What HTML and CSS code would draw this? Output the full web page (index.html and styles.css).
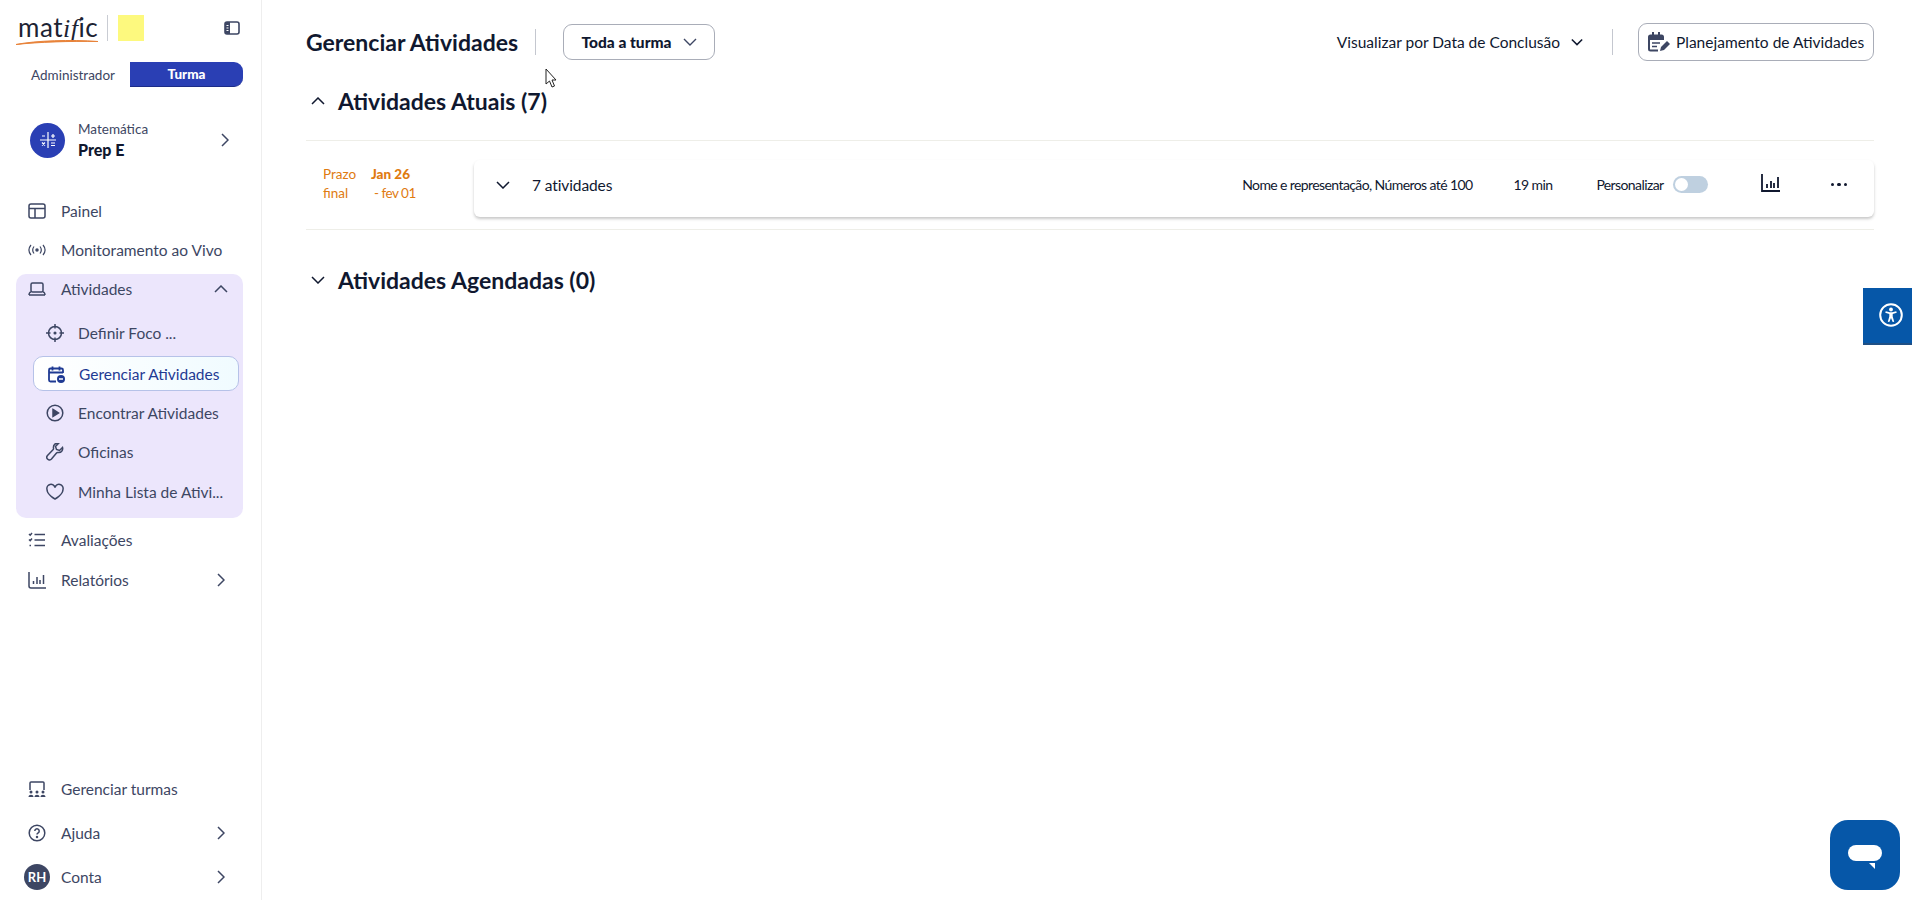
FILE: index.html
```html
<!DOCTYPE html>
<html lang="pt">
    <head>
        <meta charset="UTF-8">
        <title>Gerenciar Atividades</title>
        <link rel="stylesheet" href="styles.css">
    </head>
    <body>
        <aside class="sidebar">
            <div class="brand">
                <span class="logo">mat<i>if</i>ic
                    <svg class="logo-swoosh" viewBox="0 0 82 6"><path d="M0 5.500C20 1.500 55 .5 82 2.500 55 2 22 3 0 5.500z" fill="#e8833a" stroke="#e8833a"/></svg>
                </span>
                <span class="brand-divider"></span>
                <span class="school-badge"></span>
                <svg class="collapse-icon" viewBox="0 0 16 14"><rect x="1" y="1" width="14" height="12" rx="2" fill="none" stroke="#3d4663" stroke-width="1.6"/><path d="M1 3a2 2 0 0 1 2-2h3v12H3a2 2 0 0 1-2-2z" fill="#3d4663"/><path d="M2.500 4.500h2M2.500 7h2M2.500 9.500h2" stroke="#fff"/></svg>
            </div>
            <div class="role-tabs">
                <span class="role-tab">Administrador</span>
                <span class="role-tab role-active">Turma</span>
            </div>
            <div class="subject">
                <span class="subject-icon">
                    <svg viewBox="0 0 18 18" width="18" height="18" stroke="#fff" fill="none" stroke-width="1.2"><path d="M9 1v16M1 9h16M3 5h3M12 5h4M14 3v4M3 11.500l3 3M6 11.500l-3 3M12 12h4M12 14.500h4"/></svg>
                </span>
                <div class="subject-text">
                    <span class="subject-label">Matemática</span>
                    <span class="subject-name">Prep E</span>
                </div>
                <svg class="chevron subject-chevron" viewBox="0 0 8 14"><path d="M1 1l6 6-6 6"/></svg>
            </div>

            <nav class="nav">
                <a class="nav-item">
                    <svg class="nav-icon" viewBox="0 0 18 18"><rect x="1" y="2" width="16" height="14" rx="2"/><path d="M1 6.500h16M7 6.500V16"/></svg>
                    Painel
                </a>
                <a class="nav-item">
                    <svg class="nav-icon" viewBox="0 0 18 18"><circle cx="9" cy="9" r="1" fill="#3d4663"/><path d="M6 5.500c-1.500 2-1.500 5 0 7M12 5.500c1.500 2 1.500 5 0 7M3 4c-2.500 3-2.500 7 0 10M15 4c2.500 3 2.500 7 0 10" stroke-width="1.200"/></svg>
                    Monitoramento ao Vivo
                </a>
                <div class="nav-group">
                    <a class="nav-item group-head">
                        <svg class="nav-icon" viewBox="0 0 18 18"><rect x="3" y="3" width="12" height="9" rx="1.500"/><path d="M1 15h16M1 15c0-1.500 1-3 2-3M17 15c0-1.500-1-3-2-3"/></svg>
                        Atividades
                        <svg class="chevron" viewBox="0 0 14 8"><path d="M1 7l6-6 6 6"/></svg>
                    </a>
                    <a class="nav-item sub-item">
                        <svg class="nav-icon" viewBox="0 0 18 18"><circle cx="9" cy="9" r="6.500"/><circle cx="9" cy="9" r="0.800" fill="#3d4663"/><path d="M9 0v4.500M9 13.500V18M0 9h4.500M13.500 9H18"/></svg>
                        Definir Foco ...
                    </a>
                    <a class="nav-item sub-item sub-active">
                        <svg class="nav-icon" viewBox="0 0 18 18"><path d="M16 8V5a1.500 1.500 0 0 0-1.500-1.500h-11A1.500 1.500 0 0 0 2 5v10a1.500 1.500 0 0 0 1.500 1.500H9M2 7.500h14M5.500 1.500v4M12.500 1.500v4" stroke-width="1.800"/><circle cx="14" cy="14" r="4" fill="#1f3a93" stroke="none"/><path d="M12 14h4" stroke="#fff"/></svg>
                        Gerenciar Atividades
                    </a>
                    <a class="nav-item sub-item">
                        <svg class="nav-icon" viewBox="0 0 18 18"><circle cx="9" cy="9" r="7.800"/><path d="M7 5.500l5.500 3.500L7 12.500z" fill="#3d4663"/></svg>
                        Encontrar Atividades
                    </a>
                    <a class="nav-item sub-item">
                        <svg class="nav-icon" viewBox="0 0 18 18"><path d="M16.500 4.500l-3 3-3-1-1-3 3-3c-3-.8-5.500 1.500-5 4.500.1.600 0 1.200-.5 1.700L1.500 12.500a2.500 2.500 0 0 0 4 3.500l5-6c.4-.4 1-.6 1.600-.5 3 .5 5.200-2 4.400-5z"/></svg>
                        Oficinas
                    </a>
                    <a class="nav-item sub-item">
                        <svg class="nav-icon" viewBox="0 0 18 18"><path d="M9 16S1 11.500 1 6.500A4 4 0 0 1 9 4.500a4 4 0 0 1 8 2c0 5-8 9.500-8 9.500z"/></svg>
                        Minha Lista de Ativi...
                    </a>
                </div>
                <a class="nav-item">
                    <svg class="nav-icon" viewBox="0 0 18 18"><path d="M6.500 3.500H17M6.500 9H17M6.500 14.500H17M1 3l1.200 1.200L4 2M1 8.500l1.200 1.200L4 7.500M1.500 14.500h1.500"/></svg>
                    Avaliações
                </a>
                <a class="nav-item">
                    <svg class="nav-icon" viewBox="0 0 18 18"><path d="M1 1v14a2 2 0 0 0 2 2h15M5.500 10v3M9 6v7M12 9v4M15.500 4v9"/></svg>
                    Relatórios
                    <svg class="chevron" viewBox="0 0 8 14"><path d="M1 1l6 6-6 6"/></svg>
                </a>
            </nav>

            <div class="nav-bottom">
                <a class="nav-item">
                    <svg class="nav-icon" viewBox="0 0 18 18"><path d="M2 10V3a1 1 0 0 1 1-1h12a1 1 0 0 1 1 1v7"/><g fill="#3d4663" stroke="none"><circle cx="3" cy="12" r="1.500"/><circle cx="9" cy="12" r="1.500"/><circle cx="15" cy="12" r="1.500"/><path d="M0.500 17c0-3 5-3 5 0zM6.500 17c0-3 5-3 5 0zM12.500 17c0-3 5-3 5 0z"/></g></svg>
                    Gerenciar turmas
                </a>
                <a class="nav-item bottom-gap">
                    <svg class="nav-icon" viewBox="0 0 18 18"><circle cx="9" cy="9" r="7.800"/><path d="M6.800 7a2.200 2.200 0 1 1 3.400 1.900c-.8.500-1.200.9-1.200 1.700"/><circle cx="9" cy="13" r="0.500" fill="#3d4663"/></svg>
                    Ajuda
                    <svg class="chevron" viewBox="0 0 8 14"><path d="M1 1l6 6-6 6"/></svg>
                </a>
                <a class="nav-item">
                    <span class="avatar">RH</span>
                    Conta
                    <svg class="chevron" viewBox="0 0 8 14"><path d="M1 1l6 6-6 6"/></svg>
                </a>
            </div>
        </aside>

        <main class="content">
            <header class="topbar">
                <h1>Gerenciar Atividades</h1>
                <span class="top-divider"></span>
                <button class="class-select">
                    Toda a turma
                    <svg class="small-chevron" viewBox="0 0 14 8"><path d="M1 1l6 6 6-6"/></svg>
                </button>
                <div class="view-select">
                    Visualizar por Data de Conclusão
                    <svg class="small-chevron tight" viewBox="0 0 14 8"><path d="M1 1l6 6 6-6"/></svg>
                </div>
                <span class="top-divider right"></span>
                <button class="plan-button">
                    <svg class="plan-icon" viewBox="0 0 24 22"><path d="M16 9V6a1.500 1.500 0 0 0-1.500-1.500h-11A1.500 1.500 0 0 0 2 6v12a1.500 1.500 0 0 0 1.500 1.500H11" fill="none" stroke="#3d4663" stroke-width="2"/><path d="M2 6a2 2 0 0 1 2-2h10a2 2 0 0 1 2 2v3H2zM5 1h2v4H5zM11 1h2v4h-2z" fill="#3d4663"/><path d="M5 12h8M5 15.500h5" stroke="#3d4663" stroke-width="1.600"/><path d="M13 20l1-4 6-6 3 3-6 6z" fill="#3d4663"/></svg>
                    Planejamento de Atividades
                </button>
            </header>

            <section class="section">
                <h2 class="section-title">
                    <svg class="section-chevron" viewBox="0 0 14 8"><path d="M1 7l6-6 6 6"/></svg>
                    Atividades Atuais (7)
                </h2>
                <div class="assignment-row">
                    <div class="due">
                        <div class="due-label">Prazo<br>final</div>
                        <div class="due-dates"><b>Jan 26</b><br><span class="due-end">- fev 01</span></div>
                    </div>
                    <div class="assignment-card">
                        <svg class="section-chevron card-chevron" viewBox="0 0 14 8"><path d="M1 1l6 6 6-6"/></svg>
                        <span class="assignment-count">7 atividades</span>
                        <span class="assignment-topic">Nome e representação, Números até 100</span>
                        <span class="assignment-time">19 min</span>
                        <span class="assignment-custom">Personalizar</span>
                        <span class="toggle"><span class="toggle-knob"></span></span>
                        <svg class="report-icon" viewBox="0 0 20 20"><path d="M1 1v17h18M6 11v4M10 8v7M13 10v5M17 4v11" fill="none" stroke="#10182f" stroke-width="1.800"/></svg>
                        <span class="dots"><i></i><i></i><i></i></span>
                    </div>
                </div>
            </section>

            <h2 class="section-title scheduled">
                <svg class="section-chevron" viewBox="0 0 14 8"><path d="M1 1l6 6 6-6"/></svg>
                Atividades Agendadas (0)
            </h2>
        </main>

        <svg class="cursor" viewBox="0 0 12 20"><path d="M1 1v15l3.500-3 2.500 6 2.500-1-2.500-6H11z" fill="#fff" stroke="#222" stroke-width="1"/></svg>

        <div class="a11y-tab">
            <svg viewBox="0 0 24 24" width="24" height="24"><circle cx="12" cy="12" r="10.800" fill="none" stroke="#fff" stroke-width="2"/><circle cx="12" cy="6.500" r="1.900" fill="#fff"/><path d="M6.500 9l4 1.200h3l4-1.200" fill="none" stroke="#fff" stroke-width="1.800"/><path d="M10.300 10h3.400v3.500l1.500 5.200-1.500.4L12 15l-1.700 4.100-1.500-.4 1.500-5.200z" fill="#fff"/></svg>
        </div>
        <div class="chat-bubble">
            <span class="chat-pill"></span>
            <span class="chat-tail"></span>
        </div>
    </body>
</html>
```

FILE: styles.css
```css
* {
    margin: 0;
    padding: 0;
    box-sizing: border-box;
    font-family: 'Lato', sans-serif;
}

html, body {
    height: 100%;
    overflow: hidden;
}

body {
    display: flex;
    background: white;
    color: #10182f;
}

/* sidebar */
.sidebar {
    width: 262px;
    height: 900px;
    flex-shrink: 0;
    display: flex;
    flex-direction: column;
    padding: 14px 18px 0 16px;
    border-right: 1px solid #eeeeee;
}

.brand {
    display: flex;
    align-items: center;
    height: 27px;
}

.logo {
    position: relative;
    width: 75px;
    margin-left: 2px;
    font-size: 26px;
    letter-spacing: 0.5px;
    line-height: 26px;
    color: #1c2333;
    white-space: nowrap;
}

.logo i {
    font-family: 'Liberation Serif', serif;
}

.logo-swoosh {
    position: absolute;
    left: -2px;
    top: 25px;
    width: 82px;
    height: 6px;
}

.brand-divider {
    width: 1px;
    height: 26px;
    margin-left: 14px;
    background: #c9ccd3;
}

.school-badge {
    width: 26px;
    height: 26px;
    margin-left: 10px;
    background: #fdf97e;
}

.collapse-icon {
    width: 16px;
    height: 14px;
    margin-left: 80px;
}

.role-tabs {
    display: flex;
    align-items: center;
    margin-top: 21px;
    height: 25px;
}

.role-tab {
    width: 114px;
    font-size: 13.5px;
    color: #3d4663;
    text-align: center;
}

.role-active {
    width: 113px;
    height: 25px;
    line-height: 24px;
    background: #2a3fb4;
    color: white;
    font-weight: 900;
    border-radius: 0 9px 9px 0;
    border-bottom: 1px solid #1c2c88;
}

.subject {
    display: flex;
    align-items: center;
    margin: 35px 0 0 14px;
    height: 36px;
}

.subject-icon {
    width: 35px;
    height: 35px;
    border-radius: 50%;
    background: #2a3fb4;
    display: flex;
    align-items: center;
    justify-content: center;
}

.subject-text {
    display: flex;
    flex-direction: column;
    margin-left: 13px;
    width: 143px;
}

.subject-label {
    font-size: 13.5px;
    color: #3d4663;
    line-height: 18px;
}

.subject-name {
    font-size: 16px;
    font-weight: 900;
    line-height: 23px;
}

.chevron {
    width: 8px;
    height: 14px;
    margin-left: auto;
    margin-right: 18px;
    fill: none;
    stroke: #3d4663;
    stroke-width: 1.5;
}

.subject-chevron {
    margin: 0;
}

.group-head .chevron {
    width: 14px;
    height: 8px;
    margin-right: 15px;
}

.nav {
    margin-top: 33px;
}

.nav-item {
    display: flex;
    align-items: center;
    height: 39.400px;
    padding-left: 12px;
    font-size: 15.500px;
    color: #3d4663;
    white-space: nowrap;
}

.nav-icon {
    width: 18px;
    height: 18px;
    margin-right: 15px;
    flex-shrink: 0;
    fill: none;
    stroke: #3d4663;
    stroke-width: 1.500;
}

.nav-group {
    background: #ece6fc;
    border-radius: 10px;
    height: 244px;
    margin-top: 4px;
    margin-bottom: 3px;
}

.group-head {
    height: 31px;
    margin-bottom: 9px;
}

.sub-item {
    padding-left: 30px;
    font-size: 15.500px;
}

.sub-item .nav-icon {
    margin-right: 14px;
}

.sub-active {
    height: 35px;
    margin: 3px 4px 2px 17px;
    padding-left: 13px;
    color: #1f3a93;
    background: linear-gradient(90deg, #ffffff, #f0fbff);
    border: 1px solid #b6c2e8;
    border-radius: 10px;
}

.sub-active .nav-icon {
    stroke: #1f3a93;
}

.nav-bottom {
    margin-top: auto;
    margin-bottom: 5px;
}

.nav-bottom .nav-item {
    height: 36px;
}

.bottom-gap {
    margin: 8px 0;
}

.avatar {
    width: 26px;
    height: 26px;
    margin: 0 11px 0 -4px;
    border-radius: 50%;
    background: #3d4663;
    color: white;
    font-size: 13px;
    font-weight: 700;
    display: flex;
    align-items: center;
    justify-content: center;
}

/* main column */
.content {
    flex: 1;
    padding: 23px 38px 0 44px;
}

.topbar {
    display: flex;
    align-items: center;
    height: 38px;
}

.topbar h1 {
    width: 229px;
    font-size: 23px;
    font-weight: 700;
    white-space: nowrap;
}

.top-divider {
    width: 1px;
    height: 26px;
    background: #c4c7cf;
}

.top-divider.right {
    margin: 0 25px 0 29px;
}

.class-select {
    display: flex;
    align-items: center;
    justify-content: center;
    gap: 11px;
    width: 152px;
    height: 36px;
    margin-left: 27px;
    background: white;
    border: 1px solid #a9adb8;
    border-radius: 9px;
    font-size: 15.500px;
    font-weight: 900;
    color: #10182f;
}

.small-chevron {
    width: 14px;
    height: 8px;
    fill: none;
    stroke: #3d4663;
    stroke-width: 1.400;
}

.view-select {
    display: flex;
    align-items: center;
    gap: 11px;
    margin-left: auto;
    font-size: 15.500px;
    white-space: nowrap;
}

.tight {
    width: 12px;
    stroke: #10182f;
    stroke-width: 1.800;
}

.plan-button {
    display: flex;
    align-items: center;
    gap: 5px;
    width: 236px;
    height: 38px;
    padding-left: 8px;
    background: white;
    border: 1px solid #a9adb8;
    border-radius: 9px;
    font-size: 15.500px;
    color: #10182f;
    white-space: nowrap;
}

.plan-icon {
    width: 24px;
    height: 22px;
}

.section-title {
    display: flex;
    align-items: center;
    height: 30px;
    font-size: 23px;
    font-weight: 700;
}

.section-chevron {
    width: 14px;
    height: 8px;
    margin: 0 13px 0 5px;
    fill: none;
    stroke: #10182f;
    stroke-width: 1.500;
}

.section > .section-title {
    margin-top: 25px;
}

.assignment-row {
    display: flex;
    margin-top: 24px;
    height: 90px;
    padding-top: 19px;
    border-top: 1px solid #eeeee8;
    border-bottom: 1px solid #eeeee8;
}

.due {
    display: flex;
    width: 168px;
    padding: 5px 0 0 17px;
    font-size: 13.500px;
    line-height: 19px;
    color: #e07b10;
}

.due-label {
    width: 48px;
}

.due-dates b {
    font-weight: 900;
}

.due-end {
    margin-left: 3px;
    letter-spacing: -0.5px;
}

.assignment-card {
    flex: 1;
    height: 57px;
    display: flex;
    align-items: center;
    padding: 0 27px 8px 0;
    background: white;
    border-radius: 6px;
    box-shadow: 0 2px 3px rgba(60, 60, 60, 0.28);
    font-size: 14px;
    letter-spacing: -0.6px;
}

.card-chevron {
    margin: 0 0 0 22px;
}

.assignment-count {
    margin-left: 22px;
    font-size: 15.500px;
    letter-spacing: -0.1px;
}

.assignment-topic {
    margin-left: auto;
    white-space: nowrap;
}

.assignment-time {
    margin-left: 41px;
}

.assignment-custom {
    margin-left: 44px;
}

.toggle {
    width: 35px;
    height: 17px;
    margin-left: 9px;
    display: flex;
    align-items: center;
    background: #bfd0e0;
    border-radius: 9px;
    padding-left: 2px;
}

.toggle-knob {
    width: 13px;
    height: 13px;
    border-radius: 50%;
    background: white;
}

.report-icon {
    width: 20px;
    height: 20px;
    margin-left: 53px;
    margin-bottom: 3px;
}

.dots {
    display: flex;
    gap: 3px;
    margin-left: 50px;
}

.dots i {
    width: 3.500px;
    height: 3.500px;
    border-radius: 50%;
    background: #10182f;
}

.scheduled {
    margin-top: 35px;
}

/* things floating over the page */
.cursor {
    position: absolute;
    left: 545px;
    top: 68px;
    width: 12px;
    height: 20px;
}

.a11y-tab {
    position: absolute;
    right: 0;
    top: 288px;
    width: 49px;
    height: 57px;
    padding: 0 0 2px 6px;
    display: flex;
    align-items: center;
    justify-content: center;
    background: #0657a8;
    border-bottom: 2px solid #1f4f84;
}

.chat-bubble {
    position: absolute;
    left: 1830px;
    top: 820px;
    width: 70px;
    height: 70px;
    border-radius: 18px;
    background: #0657a8;
}

.chat-pill {
    position: absolute;
    left: 18px;
    top: 25px;
    width: 34px;
    height: 16px;
    border-radius: 8px;
    background: white;
}

.chat-tail {
    position: absolute;
    left: 39px;
    top: 43px;
    border-top: 6px solid white;
    border-left: 6px solid transparent;
}
```
